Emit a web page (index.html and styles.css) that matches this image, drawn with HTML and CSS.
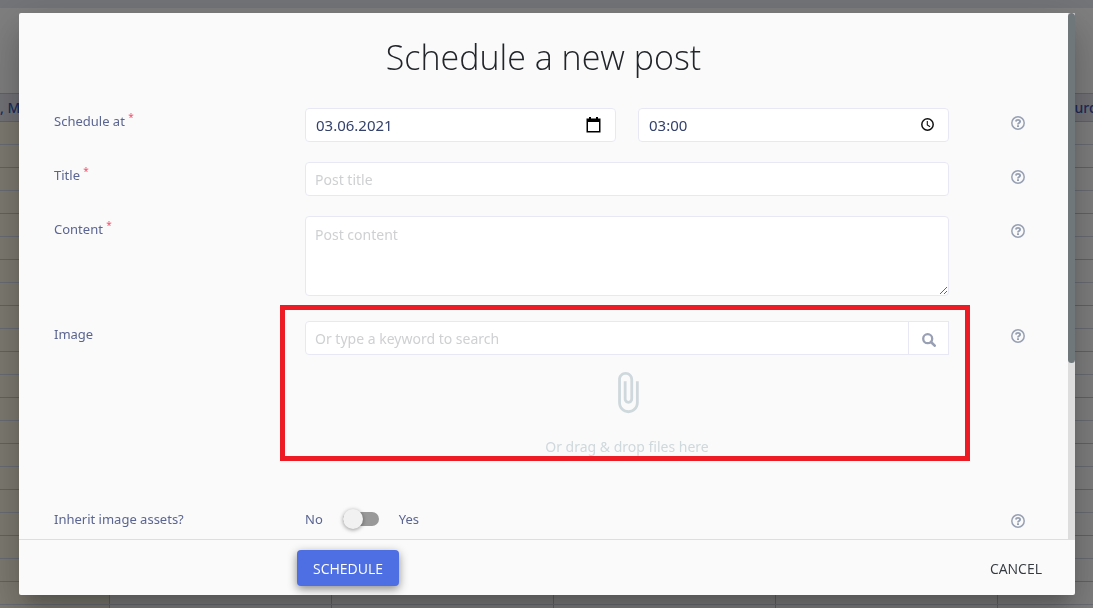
FILE: index.html
```html
<!DOCTYPE html>
<html lang="en">
<head>
<meta charset="utf-8">
<title>Schedule a new post</title>
<meta name="viewport" content="width=device-width, initial-scale=1">
<link rel="stylesheet" href="styles.css">
</head>
<body>
<svg class="sprite" aria-hidden="true">
  <symbol id="help" viewBox="0 0 14 14">
    <circle cx="7" cy="7" r="6.2" fill="none" stroke="currentColor" stroke-width="1.5"/>
    <path d="M4.8 5.500C5 4.400 5.900 3.900 7 3.900c1.200 0 2.100.700 2.100 1.700 0 1.500-2.100 1.400-2.100 2.900" fill="none" stroke="currentColor" stroke-width="1.900"/>
    <path d="M6 9.200h2v1.900H6z" fill="currentColor"/>
  </symbol>
</svg>

<div class="page" aria-hidden="true">
  <div class="page-bar"></div>
  <table class="calendar">
    <colgroup><col class="col-first"><col class="col-day"><col class="col-day"><col class="col-day"><col class="col-day"><col class="col-day"></colgroup>
    <thead><tr><th>, M</th><th></th><th></th><th></th><th></th><th class="head-last">urd</th></tr></thead>
    <tbody id="slots"></tbody>
  </table>
</div>

<div class="overlay">
  <form class="dialog" role="dialog" aria-labelledby="dialog-title">
    <div class="dialog-main">
      <div class="dialog-content">
        <h1 class="dialog-title" id="dialog-title">Schedule a new post</h1>

        <div class="row">
          <label class="label" for="date">Schedule at <sup class="required">*</sup></label>
          <div class="pair">
            <div class="picker">
              <input class="control control-value" id="date" type="text" value="03.06.2021">
              <svg class="picker-icon" viewBox="0 0 16 18" aria-hidden="true"><path fill="#000" fill-rule="evenodd" d="M3 1h2v1.500h5V1h2v1.500h2.500V16.500H.5V2.500H3zM2 6v9h11V6z"/></svg>
            </div>
            <div class="picker">
              <input class="control control-value" type="text" value="03:00" aria-label="Time">
              <svg class="picker-icon" viewBox="0 0 16 18" aria-hidden="true"><circle cx="8.500" cy="8.500" r="5.700" fill="none" stroke="#111" stroke-width="1.500"/><path d="M8.300 5v4l2.800 1.700" fill="none" stroke="#111" stroke-width="1.100"/></svg>
            </div>
          </div>
          <svg class="help"><use href="#help"/></svg>
        </div>

        <div class="row">
          <label class="label" for="title">Title <sup class="required">*</sup></label>
          <input class="control" id="title" type="text" placeholder="Post title">
          <svg class="help"><use href="#help"/></svg>
        </div>

        <div class="row row-content">
          <label class="label" for="content">Content <sup class="required">*</sup></label>
          <textarea class="control control-area" id="content" placeholder="Post content"></textarea>
          <svg class="help"><use href="#help"/></svg>
        </div>

        <div class="row">
          <label class="label" for="image">Image</label>
          <div class="image-field">
            <div class="search">
              <input class="control search-input" id="image" type="text" placeholder="Or type a keyword to search">
              <button class="search-button" type="button" aria-label="Search">
                <svg class="search-icon" viewBox="0 0 14 14"><circle cx="5.700" cy="5.700" r="4.500" fill="none" stroke="currentColor" stroke-width="2.300"/><path d="M9 9l3.700 3.700" fill="none" stroke="currentColor" stroke-width="2.600" stroke-linecap="round"/></svg>
              </button>
            </div>
            <div class="dropzone">
              <svg class="clip" viewBox="0 0 24 24" aria-hidden="true"><path fill="currentColor" d="M16.500 6v11.500c0 2.210-1.790 4-4 4s-4-1.790-4-4V5c0-1.380 1.120-2.500 2.500-2.500s2.500 1.120 2.500 2.500v10.500c0 .55-.45 1-1 1s-1-.45-1-1V6H10v9.500c0 1.380 1.120 2.500 2.500 2.500s2.500-1.120 2.500-2.500V5c0-2.210-1.790-4-4-4S7 2.790 7 5v12.500c0 3.040 2.460 5.500 5.500 5.500s5.500-2.460 5.500-5.500V6h-1.500z"/></svg>
              <span>Or drag &amp; drop files here</span>
            </div>
            <div class="highlight"></div>
          </div>
          <svg class="help"><use href="#help"/></svg>
        </div>

        <div class="row">
          <label class="label" for="inherit">Inherit image assets?</label>
          <div class="switch">
            <span>No</span>
            <input class="toggle" id="inherit" type="checkbox">
            <span>Yes</span>
          </div>
          <svg class="help"><use href="#help"/></svg>
        </div>
      </div>
      <div class="scrollbar"><div class="scrollbar-thumb"></div></div>
    </div>
    <div class="dialog-footer">
      <button class="button button-primary" type="submit">SCHEDULE</button>
      <button class="button button-flat" type="button">CANCEL</button>
    </div>
  </form>
</div>
<script src="slots.js"></script>
</body>
</html>
```
FILE: slots.js
```js
const slots = document.getElementById('slots');
for (let i = 0; i < 24; i++) {
  const row = slots.insertRow();
  for (let j = 0; j < 6; j++) row.insertCell();
}
```
FILE: styles.css
```css
* { box-sizing: border-box; }

body {
  margin: 0;
  height: 100vh;
  overflow: hidden;
  background: #fff;
  font-family: "Noto Sans", "Open Sans", sans-serif;
  font-size: 13px;
  color: #5a6592;
}

.sprite { display: none; }

.page { height: 100vh; overflow: hidden; }
.page-bar { height: 8px; background: #e9ebf1; margin-bottom: 85px; }

.calendar {
  width: 1219px;
  table-layout: fixed;
  border-collapse: collapse;
}
.col-first { width: 109px; }
.col-day { width: 222px; }
.calendar th {
  height: 28px;
  padding: 1px 0 0;
  border: 1px solid #c8c8cc;
  background: #e6e7f0;
  color: #3a56b8;
  font-size: 14px;
  line-height: 20px;
  font-weight: 500;
  text-align: left;
}
.calendar .head-last { padding-left: 77px; }
.calendar td {
  height: 23px;
  padding: 0;
  border: 1px solid #c8c8cc;
}
.calendar tr:nth-child(odd) td { border-bottom-color: #d3dbe8; }
.calendar tr:nth-child(even) td { border-top-color: #d3dbe8; }
.calendar td:first-child { background: #fcf8e3; }
.calendar th:first-child, .calendar td:first-child { border-left: 0; }

.overlay {
  position: fixed;
  inset: 0;
  display: flex;
  padding: 13px 18px 13px 19px;
  background: rgba(0, 0, 0, 0.5);
}

.dialog {
  flex: 1;
  display: flex;
  flex-direction: column;
  border-radius: 2px;
  overflow: hidden;
  background: #fafafa;
  box-shadow: 0 24px 38px 3px rgba(0, 0, 0, 0.14), 0 9px 46px 8px rgba(0, 0, 0, 0.12), 0 11px 15px -7px rgba(0, 0, 0, 0.2);
}
.dialog-main { flex: 1; min-height: 0; display: flex; }
.dialog-content {
  flex: 1;
  overflow: hidden;
  display: flex;
  flex-direction: column;
  gap: 20px;
  padding: 20px 35px 0;
}
.dialog-title {
  margin: 0 0 7px;
  line-height: 48px;
  font-family: "Open Sans", "Noto Sans", sans-serif;
  font-size: 34px;
  font-weight: 300;
  text-align: center;
  color: #212529;
}

.row {
  display: grid;
  grid-template-columns: 251px 1fr 76px;
  align-items: start;
  padding-right: 8px;
}
.row-content { margin-bottom: 5px; }
.label { padding-top: 3px; line-height: 20px; }
.required { font-size: 10px; line-height: 0; color: #f4516c; }
.help { width: 14px; height: 14px; margin: 8px 0 0 auto; color: #97a0b3; }

.control {
  display: block;
  width: 100%;
  height: 34px;
  padding: 0 9px;
  border: 1px solid #e8e8f4;
  border-radius: 4px;
  outline: 0;
  background: #fff;
  font: inherit;
  font-size: 14px;
  color: #33416b;
}
.control::placeholder { color: #cfd0d2; opacity: 1; }
.control-value { padding: 0 10px; font-size: 15px; }
.control-area { height: 80px; padding: 8px 9px; line-height: 20px; }

.pair { display: grid; grid-template-columns: 1fr 1fr; gap: 22px; }
.picker { display: grid; align-items: center; }
.picker > * { grid-area: 1 / 1; }
.picker-icon { width: 16px; height: 18px; margin-right: 14px; justify-self: end; }

.image-field { position: relative; height: 165px; }
.search { display: flex; }
.search-input { flex: 1; border-radius: 4px 0 0 4px; }
.search-button {
  display: flex;
  align-items: center;
  justify-content: center;
  width: 41px;
  margin-left: -1px;
  padding: 3px 0 0;
  border: 1px solid #e8e8f4;
  background: #fff;
  color: #99a0b4;
}
.search-icon { width: 14px; height: 14px; }
.dropzone {
  display: flex;
  flex-direction: column;
  align-items: center;
  gap: 22px;
  padding-top: 15px;
  line-height: 20px;
  font-size: 14px;
  color: #cfd8dc;
}
.clip { width: 45px; height: 45px; color: #cfd8dc; }
.highlight {
  position: absolute;
  inset: -16px -21px 25px -25px;
  border: 5px solid #ed1c24;
  pointer-events: none;
}

.switch { display: flex; align-items: center; padding-top: 3px; line-height: 20px; }
.toggle {
  appearance: none;
  display: flex;
  align-items: center;
  width: 36px;
  height: 14px;
  margin: 0 20px;
  border-radius: 7px;
  background: #999;
}
.toggle::before {
  content: "";
  width: 20px;
  height: 20px;
  border-radius: 50%;
  background: #f1f1f1;
  box-shadow: 0 1px 4px rgba(0, 0, 0, 0.4);
}

.scrollbar { width: 7px; background: #ddd; }
.scrollbar-thumb { height: 350px; border-radius: 4px; background: #6f777b; }

.dialog-footer {
  display: flex;
  justify-content: space-between;
  align-items: center;
  height: 56px;
  padding: 1px 17px 0 278px;
  border-top: 1px solid #dedede;
}
.button {
  height: 36px;
  padding: 0 16px;
  border: 0;
  border-radius: 4px;
  background: none;
  font-family: "Open Sans", "Noto Sans", sans-serif;
  font-size: 14px;
  color: #343a40;
}
.button-primary {
  background: #4e6ee4;
  color: #fff;
  box-shadow: 0 3px 10px rgba(0, 0, 0, 0.45);
}
```
